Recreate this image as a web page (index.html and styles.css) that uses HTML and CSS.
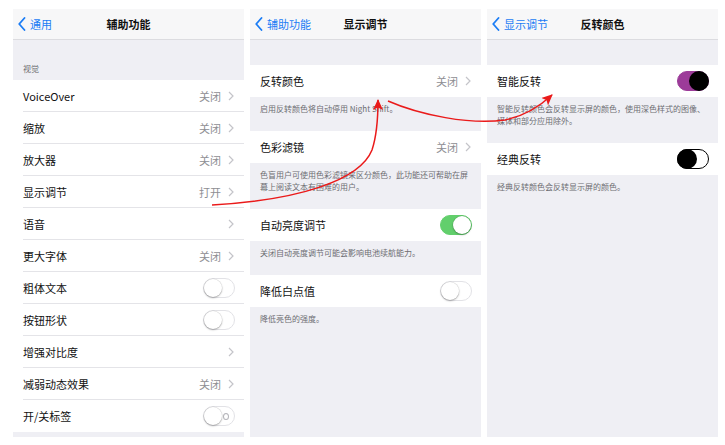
FILE: index.html
```html
<!DOCTYPE html>
<html lang="zh-CN">
<head>
<meta charset="utf-8">
<title>辅助功能</title>
<link rel="stylesheet" href="styles.css">
</head>
<body>
<div class="page">
  <section class="phone">
    <header class="nav">
      <span class="back"><svg class="back-chev" width="8" height="14" viewBox="0 0 8 14"><path d="M6.5 1 L1.2 7 L6.5 13" fill="none" stroke="#1a7cf5" stroke-width="1.8" stroke-linecap="round" stroke-linejoin="round"/></svg>通用</span>
      <h1 class="title">辅助功能</h1>
      <span></span>
    </header>
    <div class="section-head">视觉</div>
    <ul class="group">
      <li class="row"><span class="label">VoiceOver</span><span class="value">关闭</span><svg class="chev" width="6" height="10" viewBox="0 0 6 10"><path d="M1 1 L5 5 L1 9" fill="none" stroke="#c4c4c9" stroke-width="1.2"/></svg></li>
      <li class="row"><span class="label">缩放</span><span class="value">关闭</span><svg class="chev" width="6" height="10" viewBox="0 0 6 10"><path d="M1 1 L5 5 L1 9" fill="none" stroke="#c4c4c9" stroke-width="1.2"/></svg></li>
      <li class="row"><span class="label">放大器</span><span class="value">关闭</span><svg class="chev" width="6" height="10" viewBox="0 0 6 10"><path d="M1 1 L5 5 L1 9" fill="none" stroke="#c4c4c9" stroke-width="1.2"/></svg></li>
      <li class="row"><span class="label">显示调节</span><span class="value">打开</span><svg class="chev" width="6" height="10" viewBox="0 0 6 10"><path d="M1 1 L5 5 L1 9" fill="none" stroke="#c4c4c9" stroke-width="1.2"/></svg></li>
      <li class="row"><span class="label">语音</span><span class="value"></span><svg class="chev" width="6" height="10" viewBox="0 0 6 10"><path d="M1 1 L5 5 L1 9" fill="none" stroke="#c4c4c9" stroke-width="1.2"/></svg></li>
      <li class="row"><span class="label">更大字体</span><span class="value">关闭</span><svg class="chev" width="6" height="10" viewBox="0 0 6 10"><path d="M1 1 L5 5 L1 9" fill="none" stroke="#c4c4c9" stroke-width="1.2"/></svg></li>
      <li class="row"><span class="label">粗体文本</span><span class="switch"></span></li>
      <li class="row"><span class="label">按钮形状</span><span class="switch"></span></li>
      <li class="row"><span class="label">增强对比度</span><span class="value"></span><svg class="chev" width="6" height="10" viewBox="0 0 6 10"><path d="M1 1 L5 5 L1 9" fill="none" stroke="#c4c4c9" stroke-width="1.2"/></svg></li>
      <li class="row"><span class="label">减弱动态效果</span><span class="value">关闭</span><svg class="chev" width="6" height="10" viewBox="0 0 6 10"><path d="M1 1 L5 5 L1 9" fill="none" stroke="#c4c4c9" stroke-width="1.2"/></svg></li>
      <li class="row"><span class="label">开/关标签</span><span class="switch labelled"><span class="ring"></span></span></li>
    </ul>
  </section>

  <section class="phone">
    <header class="nav">
      <span class="back"><svg class="back-chev" width="8" height="14" viewBox="0 0 8 14"><path d="M6.5 1 L1.2 7 L6.5 13" fill="none" stroke="#1a7cf5" stroke-width="1.8" stroke-linecap="round" stroke-linejoin="round"/></svg>辅助功能</span>
      <h1 class="title">显示调节</h1>
      <span></span>
    </header>
    <div class="spacer"></div>
    <ul class="group">
      <li class="row"><span class="label">反转颜色</span><span class="value">关闭</span><svg class="chev" width="6" height="10" viewBox="0 0 6 10"><path d="M1 1 L5 5 L1 9" fill="none" stroke="#c4c4c9" stroke-width="1.2"/></svg></li>
    </ul>
    <p class="footer">启用反转颜色将自动停用 Night Shift。</p>
    <ul class="group">
      <li class="row"><span class="label">色彩滤镜</span><span class="value">关闭</span><svg class="chev" width="6" height="10" viewBox="0 0 6 10"><path d="M1 1 L5 5 L1 9" fill="none" stroke="#c4c4c9" stroke-width="1.2"/></svg></li>
    </ul>
    <p class="footer">色盲用户可使用色彩滤镜来区分颜色，此功能还可帮助在屏幕上阅读文本有困难的用户。</p>
    <ul class="group">
      <li class="row"><span class="label">自动亮度调节</span><span class="switch on"></span></li>
    </ul>
    <p class="footer">关闭自动亮度调节可能会影响电池续航能力。</p>
    <ul class="group">
      <li class="row"><span class="label">降低白点值</span><span class="switch"></span></li>
    </ul>
    <p class="footer">降低亮色的强度。</p>
  </section>

  <section class="phone">
    <header class="nav">
      <span class="back"><svg class="back-chev" width="8" height="14" viewBox="0 0 8 14"><path d="M6.5 1 L1.2 7 L6.5 13" fill="none" stroke="#1a7cf5" stroke-width="1.8" stroke-linecap="round" stroke-linejoin="round"/></svg>显示调节</span>
      <h1 class="title">反转颜色</h1>
      <span></span>
    </header>
    <div class="spacer"></div>
    <ul class="group">
      <li class="row"><span class="label">智能反转</span><span class="switch purple"></span></li>
    </ul>
    <p class="footer">智能反转颜色会反转显示屏的颜色，使用深色样式的图像、媒体和部分应用除外。</p>
    <ul class="group">
      <li class="row"><span class="label">经典反转</span><span class="switch inverted"></span></li>
    </ul>
    <p class="footer">经典反转颜色会反转显示屏的颜色。</p>
  </section>
</div>

<svg class="arrows" width="725" height="445" viewBox="0 0 725 445">
  <defs>
    <marker id="head" markerUnits="userSpaceOnUse" markerWidth="12" markerHeight="10" refX="10" refY="5" orient="auto">
      <path d="M0 0 L11 5 L0 10 L2.5 5 Z" fill="#ea1a1a"/>
    </marker>
  </defs>
  <path d="M212 205 C 300 200 360 180 372 150 C 377 135 378 116 378 100" fill="none" stroke="#ea1a1a" stroke-width="1.5" marker-end="url(#head)"/>
  <path d="M388 101 C 420 115 470 125 505 120 C 525 116 540 106 552 95" fill="none" stroke="#ea1a1a" stroke-width="1.5" marker-end="url(#head)"/>
</svg>
</body>
</html>
```

FILE: styles.css
```css
html, body {
  margin: 0;
  padding: 0;
  background: #ffffff;
}

body {
  width: 725px;
  height: 445px;
  position: relative;
  overflow: hidden;
  font-family: "Noto Sans CJK SC", "Noto Sans", sans-serif;
  color: #111111;
}

.page {
  display: flex;
  gap: 6px;
  padding: 9px 0 0 13px;
}

.phone {
  width: 231px;
  height: 428px;
  background: #efeff4;
  display: flex;
  flex-direction: column;
  overflow: hidden;
}

.nav {
  height: 31px;
  box-sizing: border-box;
  background: #f7f7f8;
  border-bottom: 1px solid #dcdce0;
  display: grid;
  grid-template-columns: 1fr auto 1fr;
  align-items: center;
}

.back {
  display: flex;
  align-items: center;
  gap: 4px;
  padding-left: 5px;
  color: #1a7cf5;
  font-size: 11px;
  line-height: 14px;
  white-space: nowrap;
}

.back-chev {
  display: block;
  flex: none;
}

.title {
  margin: 0;
  font-size: 11px;
  font-weight: 600;
  line-height: 14px;
  color: #111111;
}

.section-head {
  height: 40px;
  box-sizing: border-box;
  display: flex;
  align-items: flex-end;
  padding: 0 0 5px 10px;
  font-size: 8px;
  line-height: 12px;
  color: #6d6d72;
}

.spacer {
  height: 25px;
  flex: none;
}

.group {
  list-style: none;
  margin: 0;
  padding: 0;
  background: #ffffff;
  flex: none;
}

.row {
  height: 32px;
  box-sizing: border-box;
  margin-left: 10px;
  padding-right: 10px;
  display: flex;
  align-items: center;
  border-bottom: 1px solid #e4e4e8;
  font-size: 11px;
  line-height: 14px;
}

.row:last-child {
  border-bottom: none;
}

.label {
  flex: 1;
  color: #111111;
}

.value {
  color: #8e8e93;
  margin-right: 7px;
}

.chev {
  display: block;
  flex: none;
}

.footer {
  margin: 0;
  padding: 6px 9px 16px 10px;
  font-size: 8px;
  line-height: 12px;
  color: #6d6d72;
  flex: none;
}

.switch {
  position: relative;
  width: 32px;
  height: 20px;
  box-sizing: border-box;
  border-radius: 10px;
  border: 1px solid #e2e2e6;
  background: #ffffff;
  margin-right: -1px;
  flex: none;
}

.switch::after {
  content: "";
  position: absolute;
  top: 0;
  left: 0;
  width: 18px;
  height: 18px;
  border-radius: 50%;
  background: #ffffff;
  box-shadow: 0 1px 2px rgba(0, 0, 0, 0.28), 0 0 0 0.5px rgba(0, 0, 0, 0.1);
}

.switch.on {
  background: #62cf6c;
  border-color: #62cf6c;
}

.switch.on::after {
  left: 12px;
}

.switch.purple {
  background: #9c3b99;
  border-color: #9c3b99;
}

.switch.purple::after {
  left: 11px;
  top: -1px;
  width: 20px;
  height: 20px;
  background: #000000;
  box-shadow: none;
}

.switch.inverted {
  border: 1.5px solid #000000;
}

.switch.inverted::after {
  top: -1.5px;
  left: -1.5px;
  width: 20px;
  height: 20px;
  background: #000000;
  box-shadow: none;
}

.ring {
  position: absolute;
  right: 5px;
  top: 6px;
  width: 4px;
  height: 5px;
  border: 1px solid #b5b5ba;
  border-radius: 50%;
}

.arrows {
  position: absolute;
  left: 0;
  top: 0;
  pointer-events: none;
}
```
